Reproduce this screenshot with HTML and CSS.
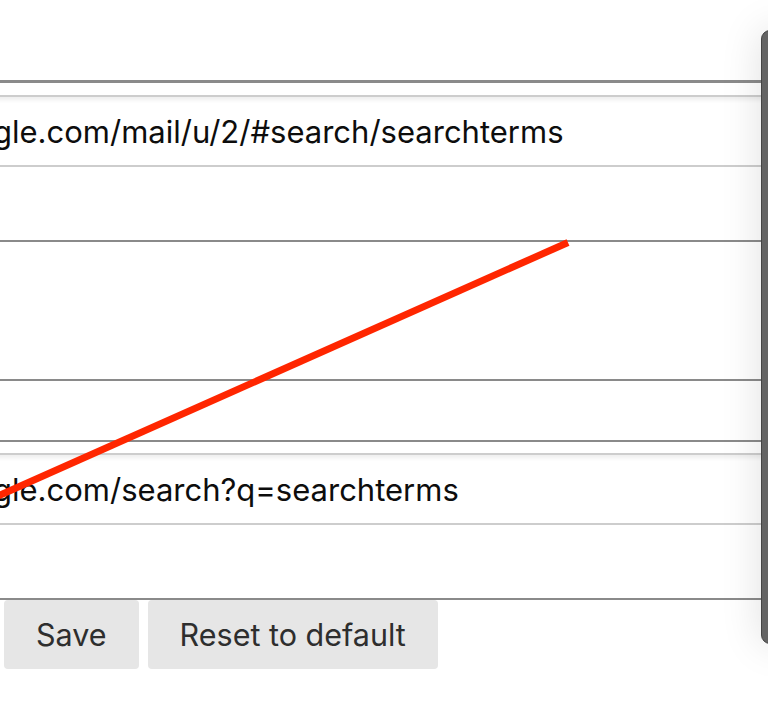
FILE: index.html
```html
<!DOCTYPE html>
<html>
<head>
<meta charset="utf-8">
<link rel="stylesheet" href="styles.css">
</head>
<body>
<div class="page">
  <div class="table">
    <div class="row row-url">
      <input class="url" type="text" value="gle.com/mail/u/2/#search/searchterms">
    </div>
    <div class="row row-blank-tall"></div>
    <div class="row row-blank-short"></div>
    <div class="row row-url row-url-2">
      <input class="url" type="text" value="gle.com/search?q=searchterms">
    </div>
  </div>
  <div class="actions">
    <button class="btn">Save</button>
    <button class="btn">Reset to default</button>
  </div>
</div>
<div class="drawer"></div>
<svg class="strike" width="768" height="712" viewBox="0 0 768 712">
  <line x1="-10" y1="499.5" x2="568" y2="242.5" stroke="#ff2600" stroke-width="7"/>
</svg>
</body>
</html>
```

FILE: styles.css
```css
html, body {
  margin: 0;
  padding: 0;
  background: #ffffff;
  overflow: hidden;
}

body {
  width: 768px;
  height: 712px;
  position: relative;
  font-family: Inter, "Liberation Sans", Arial, sans-serif;
}

.page {
  padding-top: 80px;
}

.table {
  border-top: 3px solid #8a8a8a;
}

.row {
  border-bottom: 2px solid #8a8a8a;
  box-sizing: border-box;
}

.row-url {
  height: 159px;
  padding-top: 12px;
}

.row-url-2 {
  height: 158px;
  padding-top: 11px;
}

.row-blank-tall {
  height: 139px;
}

.row-blank-short {
  height: 61px;
}

.url {
  display: block;
  box-sizing: border-box;
  width: 780px;
  height: 72px;
  margin: 0 0 0 -7px;
  padding: 0;
  border: 2px solid #cdcdcd;
  border-left: none;
  border-radius: 0;
  box-shadow: inset 0 3px 4px rgba(0, 0, 0, 0.07);
  background: #ffffff;
  color: #0d0d0d;
  font-family: Inter, "Liberation Sans", Arial, sans-serif;
  font-size: 31px;
  outline: none;
}

.actions {
  display: flex;
  gap: 9px;
  padding-left: 4px;
}

.btn {
  height: 69px;
  padding: 0 32px;
  border: none;
  border-radius: 4px;
  background: #e6e6e6;
  color: #2e2e2e;
  font-family: Inter, "Liberation Sans", Arial, sans-serif;
  font-size: 30.5px;
}

.drawer {
  position: absolute;
  left: 761px;
  top: 30px;
  width: 40px;
  height: 614px;
  box-sizing: border-box;
  background: #646464;
  border: 1px solid #454545;
  border-radius: 9px;
  box-shadow: 0 0 40px rgba(0, 0, 0, 0.13);
}

.strike {
  position: absolute;
  left: 0;
  top: 0;
  pointer-events: none;
}
```
